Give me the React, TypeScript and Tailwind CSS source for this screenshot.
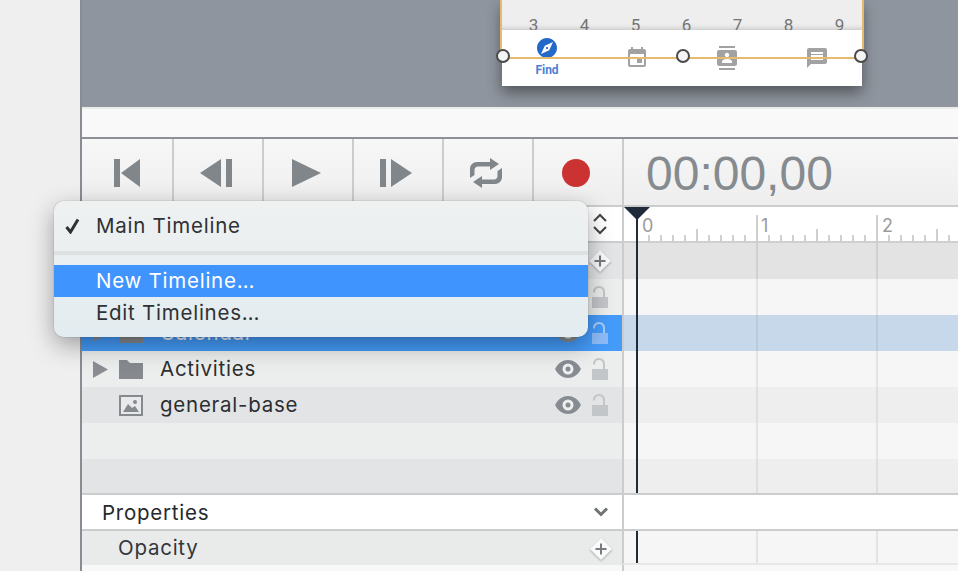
import React from 'react';
import { MdExplore, MdEvent, MdContacts, MdMessage } from 'react-icons/md';

const font = "font-['Inter','Liberation_Sans',sans-serif]";
const label = 'text-[20.5px] tracking-[0.75px]';

const Eye = () => (
  <svg width="26" height="18" viewBox="0 0 26 18">
    <path d="M0 9C6-3 20-3 26 9 20 21 6 21 0 9Z" fill="#868c91" />
    <circle cx="13" cy="9" r="5.5" fill="#eef0f0" />
    <circle cx="13" cy="9" r="2.5" fill="#868c91" />
  </svg>
);

const Lock = ({ active }: { active?: boolean }) => (
  <svg width="16" height="22" viewBox="0 0 16 22">
    <path d="M2 6.500C2 3 4 1 7 1s5 2 5 5.500V11" fill="none" stroke={active ? '#a9cdf9' : '#c3c6c9'} strokeWidth="2" />
    <rect x="0" y="11" width="16" height="11" fill={active ? '#8ebcf8' : '#c3c6c9'} />
  </svg>
);

const Diamond = () => (
  <svg width="24" height="24" viewBox="0 0 24 24" className="drop-shadow-[0_1px_1px_rgba(0,0,0,0.3)]">
    <path d="M12 1 23 12 12 23 1 12Z" fill="#fafafa" />
    <path d="M12 6.500v11M6.500 12h11" stroke="#777c80" strokeWidth="2" />
  </svg>
);

const Arrow = () => (
  <svg width="15" height="17" viewBox="0 0 15 17">
    <path d="M0 0 15 8.500 0 17Z" fill="#8a8e92" />
  </svg>
);

const Folder = () => (
  <svg width="24" height="19" viewBox="0 0 24 19">
    <path d="M0 0H8L11 3H24V19H0Z" fill="#868a8e" />
  </svg>
);

const ImageIcon = () => (
  <svg width="24" height="21" viewBox="0 0 24 21">
    <rect x="1" y="1" width="22" height="19" fill="#fff" fillOpacity="0.2" stroke="#868a8e" strokeWidth="2" />
    <path d="M4 17 9 9 13 13 16 11 20 17Z" fill="#868a8e" />
    <circle cx="16" cy="7" r="2" fill="#868a8e" />
  </svg>
);

const tracks = [
  { left: 'bg-[#e3e4e5]', right: 'bg-[#e3e3e3]', line: 'border-[#d0d0d0]' },
  { left: 'bg-[#eceeee]', right: 'bg-[#f6f6f6]', line: 'border-[#e3e3e3]' },
  { left: 'bg-[#449bfa]', right: 'bg-[#c8d8eb]', line: 'border-[#bccbdc]', name: 'Calendar', kind: 'folder', active: true },
  { left: 'bg-[#eceeee]', right: 'bg-[#f6f6f6]', line: 'border-[#e3e3e3]', name: 'Activities', kind: 'folder' },
  { left: 'bg-[#e3e4e6]', right: 'bg-[#eeeeee]', line: 'border-[#dfdfdf]', name: 'general-base', kind: 'image' },
  { left: 'bg-[#eceeee]', right: 'bg-[#f6f6f6]', line: 'border-[#e3e3e3]' },
  { left: 'bg-[#e3e4e6]', right: 'bg-[#eeeeee]', line: 'border-[#dfdfdf]', short: true },
];

const GridCells = ({ line }: { line: string }) => (
  <div className="flex flex-1">
    <div className={`w-[134px] border-r-2 ${line}`} />
    <div className={`w-[120px] border-r-2 ${line}`} />
    <div className="flex-1" />
  </div>
);

const Ruler = () => {
  const ticks = [];
  for (let i = 0; i < 29; i++) {
    const x = 25 + i * 12;
    const major = i % 10 === 9;
    const mid = i % 10 === 4;
    if (major) ticks.push(<rect key={i} x={x - 1} y="8" width="2" height="28" fill="#cfcfcf" />);
    else ticks.push(<rect key={i} x={x - 1} y={mid ? 22 : 28} width="2" height={mid ? 14 : 8} fill="#cfcfcf" />);
  }
  return (
    <svg width="334" height="36" viewBox="0 0 334 36">
      {ticks}
      <rect x="0" y="34" width="334" height="2" fill="#cfcfcf" />
      <text x="18" y="25" fontSize="18" fill="#9b9b9b" fontFamily="Inter">0</text>
      <text x="137" y="25" fontSize="18" fill="#9b9b9b" fontFamily="Inter">1</text>
      <text x="258" y="25" fontSize="18" fill="#9b9b9b" fontFamily="Inter">2</text>
    </svg>
  );
};

const ToolButton = ({ children, first }: { children: React.ReactNode; first?: boolean }) => (
  <div className={`flex items-center justify-center border-r-2 border-[#cccccc] pt-[2px] ${first ? 'w-[92px]' : 'w-[90px] pr-[4px]'}`}>{children}</div>
);

export default function App() {
  return (
    <div className={`relative flex h-[571px] w-[958px] overflow-hidden bg-[#efefef] ${font}`}>
      <div className="w-[80px] shrink-0" />
      <div className="flex flex-1 flex-col border-l-2 border-[#888d94]">
        {/* canvas */}
        <div className="h-[107px] shrink-0 bg-[#8f959e] pl-[420px]">
          <div className="relative h-[86px] w-[360px] bg-white shadow-[0_6px_14px_rgba(0,0,0,0.45)]">
            <div className="flex h-[30px] overflow-hidden bg-[#eeeeee] pl-[6px] pt-[15px] font-['Roboto',sans-serif] text-[17px] leading-[20px] text-[#757575] shadow-[inset_0_-6px_6px_-6px_rgba(0,0,0,0.25)]">
              {[3, 4, 5, 6, 7, 8, 9].map((n) => (
                <span key={n} className="w-[51px] shrink-0 text-center">{n}</span>
              ))}
            </div>
            <div className="relative h-[56px]">
              <MdExplore className="absolute left-[33px] top-[6px] text-[#2468c8]" size={24} />
              <span className="absolute left-[33px] top-[33px] w-[24px] text-center font-['Roboto',sans-serif] text-[12px] font-bold leading-[14px] text-[#4a80d4]">Find</span>
              <MdEvent className="absolute left-[123px] top-[16px] text-[#a2a2a2]" size={24} />
              <MdContacts className="absolute left-[213px] top-[16px] text-[#a2a2a2]" size={24} />
              <MdMessage className="absolute left-[303px] top-[16px] text-[#a2a2a2]" size={24} />
            </div>
            {/* selection frame */}
            <div className="absolute -left-[2px] -right-[2px] top-0 h-[59px] border-x-2 border-b-2 border-[#e5b96e]" />
            <div className="absolute -left-[6px] top-[49px] h-[14px] w-[14px] rounded-full border-2 border-[#4a4a4a] bg-[#f4f4f4]" />
            <div className="absolute left-[174px] top-[49px] h-[14px] w-[14px] rounded-full border-2 border-[#4a4a4a] bg-[#f4f4f4]" />
            <div className="absolute left-[352px] top-[49px] h-[14px] w-[14px] rounded-full border-2 border-[#4a4a4a] bg-[#f4f4f4]" />
          </div>
        </div>
        <div className="h-[30px] shrink-0 border-t-2 border-[#ececec] bg-[#f9f9f9]" />

        {/* toolbar */}
        <div className="flex h-[70px] shrink-0 border-y-2 border-t-[#8d9196] border-b-[#cccccc] bg-gradient-to-b from-[#f7f7f7] to-[#eeeeee]">
          <ToolButton first>
            <svg width="26" height="28" viewBox="0 0 26 28"><path d="M0 0H6V28H0ZM7 14 26 0V28Z" fill="#80868a" /></svg>
          </ToolButton>
          <ToolButton>
            <svg width="32" height="28" viewBox="0 0 32 28"><path d="M0 14 21 0V28ZM26 0H32V28H26Z" fill="#80868a" /></svg>
          </ToolButton>
          <ToolButton>
            <svg width="29" height="28" viewBox="0 0 29 28"><path d="M0 0 29 14 0 28Z" fill="#80868a" /></svg>
          </ToolButton>
          <ToolButton>
            <svg width="32" height="28" viewBox="0 0 32 28"><path d="M0 0H6V28H0ZM11 0 32 14 11 28Z" fill="#80868a" /></svg>
          </ToolButton>
          <ToolButton>
            <svg width="32" height="30" viewBox="0 0 32 30">
              <path d="M20 0 29 6 20 12V8.500H8C6 8.500 4.500 10 4.500 12V17L0 20V11C0 7 3 4 7 4H20Z" fill="#80868a" />
              <path d="M12 30 3 24 12 18V21.500H24C26 21.500 27.500 20 27.500 18V13L32 10V19C32 23 29 26 25 26H12Z" fill="#80868a" />
            </svg>
          </ToolButton>
          <ToolButton>
            <div className="h-[28px] w-[28px] rounded-full bg-[#cb3232]" />
          </ToolButton>
          <div className="flex flex-1 items-center pl-[22px] pt-[4px] font-['Liberation_Sans',sans-serif] text-[48px] leading-none text-[#858b8f]">00:00,00</div>
        </div>

        {/* ruler */}
        <div className="flex h-[36px] shrink-0 bg-white">
          <div className="flex w-[540px] items-center justify-end border-b-2 border-[#cccccc] pr-[14px]">
            <svg width="16" height="22" viewBox="0 0 16 22" fill="none" stroke="#444" strokeWidth="2">
              <path d="M2 8 8 2 14 8M2 14 8 20 14 14" />
            </svg>
          </div>
          <div className="flex-1 overflow-hidden border-l-2 border-[#cccccc]">
            <Ruler />
          </div>
        </div>

        {/* tracks */}
        {tracks.map((t, i) => (
          <div key={i} className={`flex shrink-0 ${t.short ? 'h-[34px]' : 'h-[36px]'}`}>
            <div className={`flex w-[540px] items-center pr-[14px] ${t.left}`}>
              {t.name && (
                <>
                  <div className="flex w-[26px] justify-end">{t.kind === 'folder' && <Arrow />}</div>
                  <div className="ml-[11px] flex w-[24px] items-center">{t.kind === 'folder' ? <Folder /> : <ImageIcon />}</div>
                  <span className={`ml-[17px] flex-1 ${label} ${t.active ? 'text-[#eef4fb]' : 'text-[#2c2e30]'}`}>{t.name}</span>
                  <Eye />
                  <div className="ml-[11px] flex">
                    <Lock active={t.active} />
                  </div>
                </>
              )}
              {!t.name && i === 0 && (
                <div className="ml-auto -mr-[4px]"><Diamond /></div>
              )}
              {!t.name && i === 1 && (
                <div className="ml-auto"><Lock /></div>
              )}
            </div>
            <div className={`flex flex-1 border-l-2 border-[#cccccc] ${t.right}`}>
              <GridCells line={t.line} />
            </div>
          </div>
        ))}

        {/* properties */}
        <div className="flex h-[38px] shrink-0 border-y-2 border-[#cccccc] bg-white">
          <div className={`flex w-[540px] items-center justify-between pl-[20px] pr-[13px] text-[#26282a] ${label}`}>
            <span className="pt-[3px]">Properties</span>
            <svg width="16" height="10" viewBox="0 0 16 10" fill="none" stroke="#6f7376" strokeWidth="3">
              <path d="M2 1.500 8 7.500 14 1.500" />
            </svg>
          </div>
          <div className="flex-1 border-l-2 border-[#cccccc]" />
        </div>
        <div className="flex h-[34px] shrink-0">
          <div className={`flex w-[540px] items-center justify-between bg-[#e9ebeb] pl-[36px] pr-[10px] text-[#33363a] ${label}`}>
            <span>Opacity</span>
            <div className="-mr-[1px] mt-[2px]"><Diamond /></div>
          </div>
          <div className="flex flex-1 border-l-2 border-b-2 border-l-[#cccccc] border-b-[#e8e8e8] bg-[#f6f6f6]">
            <GridCells line="border-[#e3e3e3]" />
          </div>
        </div>
        <div className="flex flex-1 bg-[#f8f8f8]">
          <div className="w-[540px]" />
          <div className="flex-1 border-l-2 border-[#cccccc]" />
        </div>
      </div>

      {/* playhead */}
      <div className="absolute left-[636px] top-[207px] h-[286px] w-[2px] bg-[#1f2a3a]" />
      <div className="absolute left-[636px] top-[531px] h-[32px] w-[2px] bg-[#1f2a3a]" />
      <svg className="absolute left-[624px] top-[207px]" width="26" height="13" viewBox="0 0 26 13">
        <path d="M0 0H26L13 13Z" fill="#1f2a3a" />
      </svg>

      {/* timeline menu */}
      <div className="absolute left-[54px] top-[201px] h-[136px] w-[534px] overflow-hidden rounded-[10px] bg-gradient-to-b from-[#eff1f1] to-[#e3ecf0] shadow-[0_0_1px_rgba(0,0,0,0.5),0_8px_24px_rgba(0,0,0,0.35)]">
        <div className={`flex h-[50px] items-center pl-[42px] leading-none text-[#2f3133] ${label}`}>
          <svg className="absolute left-[11px] top-[17px]" width="15" height="16" viewBox="0 0 15 16" fill="none" stroke="#2f3133" strokeWidth="3">
            <path d="M1.500 9 5.500 14 13 1.500" />
          </svg>
          Main Timeline
        </div>
        <div className="h-[4px] bg-[#dde1e1]" />
        <div className="h-[10px]" />
        <div className={`flex h-[32px] items-center bg-[#3f94fd] pl-[42px] leading-none text-white ${label}`}>New Timeline…</div>
        <div className={`flex h-[32px] items-center pl-[42px] leading-none text-[#2f3133] ${label}`}>Edit Timelines…</div>
      </div>
    </div>
  );
}
